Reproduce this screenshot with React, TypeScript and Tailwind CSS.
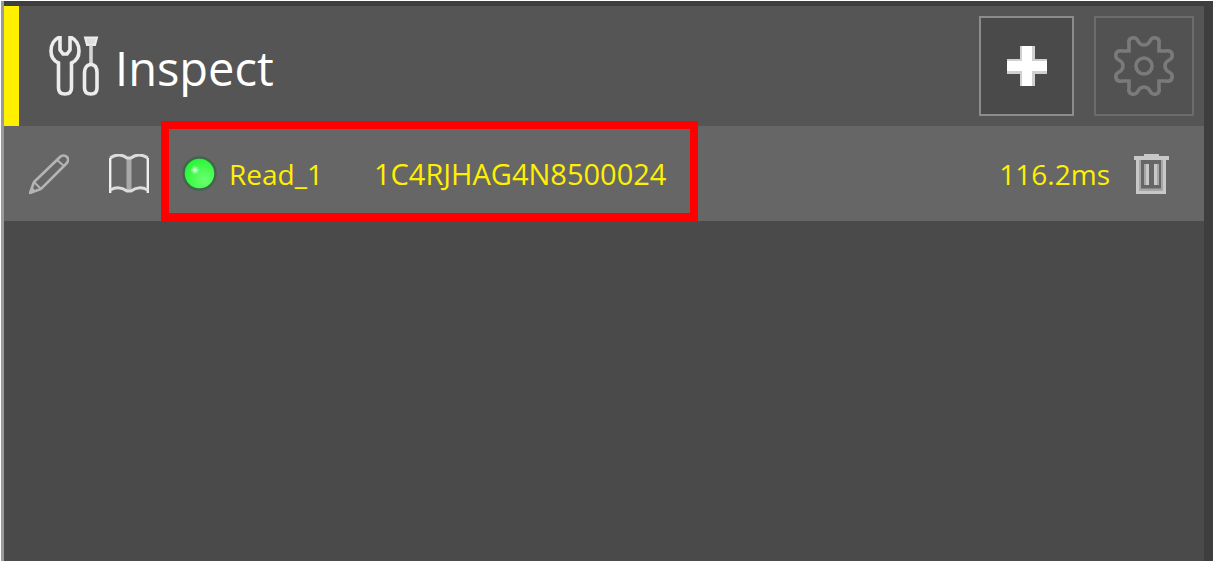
import React from "react";

function ToolsIcon() {
  return (
    <svg className="h-[60px] w-[50px] shrink-0" viewBox="0 0 50 60" fill="none" stroke="#ececec" strokeWidth="3.600" aria-hidden="true">
      <path d="M11 1C5 3 2 9 2 15C2 21 5 25 9.500 27V52C9.500 56 12 58 16 58C20 58 22.500 56 22.500 52V27C27 25 30 21 30 15C30 9 27 3 21 1V14L18 18H14L11 14Z" />
      <path d="M36 1.500H48L46 9H38Z" fill="#ddd" strokeWidth="2" />
      <path d="M42 9V28" stroke="#d4d4d4" />
      <path d="M42 28.500C38 28.500 35.500 32 35.500 37V52C35.500 56 38 58 42 58C46 58 48 56 48 52V37C48 32 46 28.500 42 28.500Z" />
    </svg>
  );
}

function PlusIcon() {
  return (
    <svg className="size-10" viewBox="0 0 40 40" aria-hidden="true">
      <path d="M13 0H28V13H40V28H28V40H13V28H0V13H13Z" fill="#d0d0d0" />
      <path d="M15 0H25V15H40V25H25V40H15V25H0V15H15Z" fill="#fff" />
    </svg>
  );
}

const GEAR_QUARTER =
  "M0-21Q4-21 6-25Q8-29 12-28Q16-27 15-22V-15H22Q27-16 28-12Q29-8 25-6Q21-4 21 0";

function GearIcon() {
  return (
    <svg className="size-[60px]" viewBox="-30 -30 60 60" fill="none" stroke="#7a7a7a" strokeWidth="3.600" aria-hidden="true">
      <path d={GEAR_QUARTER} />
      <path d={GEAR_QUARTER} transform="rotate(90)" />
      <path d={GEAR_QUARTER} transform="rotate(180)" />
      <path d={GEAR_QUARTER} transform="rotate(270)" />
      <circle r="8" />
    </svg>
  );
}

function PencilIcon() {
  return (
    <svg className="size-10" viewBox="0 0 40 40" fill="none" stroke="#b4b4b4" strokeWidth="2.600" aria-hidden="true">
      <path d="M1 39L5 28L31 3C33 1 36 1 38 3C40 5 39 8 37 10L12 35Z" />
      <path d="M5 28L12 35M28 6L35 12" strokeWidth="2" />
      <path d="M1 39L3 33L7 37Z" fill="#b4b4b4" stroke="none" />
    </svg>
  );
}

function BookIcon() {
  return (
    <svg className="size-10" viewBox="0 0 40 40" fill="none" stroke="#eee" strokeWidth="2.400" aria-hidden="true">
      <path d="M20 4V37" stroke="#a8a8a8" strokeWidth="5" />
      <path d="M1.200 39V4M38.800 4V39" />
      <path d="M1.200 4Q10-2 18 4H22Q30-2 38.800 4M1.200 36Q10 31 18 37H22Q30 31 38.800 36" strokeWidth="3" stroke="#dcdcdc" />
    </svg>
  );
}

function TrashIcon() {
  return (
    <svg className="h-10 w-[35px]" viewBox="0 0 35 40" fill="none" stroke="#c8c8c8" aria-hidden="true">
      <path d="M4.500 6V37H29.500V6" strokeWidth="5" stroke="#a6a6a6" />
      <path d="M0 4H35M10 1.500H25" strokeWidth="4" />
      <path d="M3.500 6V38.500H30.500V6" strokeWidth="3" />
      <path d="M12.500 10V31M22.500 10V31" strokeWidth="5" stroke="#a6a6a6" />
      <path d="M13.500 10V31M21.500 10V31" strokeWidth="3" />
    </svg>
  );
}

function StatusLight() {
  return (
    <svg className="size-[35px] shrink-0" viewBox="0 0 35 35" role="img" aria-label="Pass">
      <defs>
        <radialGradient id="light" cx="0.65" cy="0.7" r="0.65">
          <stop offset="0" stopColor="#6cff72" />
          <stop offset="0.55" stopColor="#48fb50" />
          <stop offset="1" stopColor="#2bf53c" />
        </radialGradient>
        <radialGradient id="glint">
          <stop offset="0" stopColor="#fff" />
          <stop offset="1" stopColor="#8cff90" stopOpacity="0" />
        </radialGradient>
      </defs>
      <circle cx="17.500" cy="17.500" r="16" fill="url(#light)" stroke="#41664a" strokeWidth="2.500" />
      <circle cx="13" cy="14" r="5" fill="url(#glint)" />
    </svg>
  );
}

export default function App() {
  return (
    <div className="flex min-h-screen flex-col border-t border-l border-white bg-[#3e3e3e] font-['Open_Sans',sans-serif]">
      <main className="flex grow flex-col border-l-[3px] border-[#9a9c9c] pt-[5px] pr-[9px]">
        <header className="flex h-[120px] items-center border-l-[15px] border-[#fff000] bg-[#555] pr-[10px] pl-[30px]">
          <ToolsIcon />
          <h1 className="ml-4 grow pt-1 text-[47px] leading-[64px] text-white">Inspect</h1>
          <button type="button" aria-label="Add" className="flex h-[100px] w-[95px] shrink-0 items-center justify-center border-2 border-[#8c8c8c] bg-[#4a4a4a]">
            <PlusIcon />
          </button>
          <button type="button" aria-label="Settings" disabled className="ml-5 flex size-[100px] shrink-0 items-center justify-center border-2 border-[#6c6c6c] bg-[#525252]">
            <GearIcon />
          </button>
        </header>
        <section className="flex grow flex-col bg-[#4a4a4a]">
          <div className="flex h-[95px] items-center bg-[#666] pr-[35px] pl-[25px] text-[28px] leading-10 text-[#fff000]">
            <button type="button" aria-label="Edit" className="shrink-0">
              <PencilIcon />
            </button>
            <button type="button" aria-label="Manual" className="ml-10 shrink-0">
              <BookIcon />
            </button>
            <div className="relative ml-3 flex h-full shrink-0 items-center pr-8 pl-[21px]">
              <StatusLight />
              <span className="ml-3 w-[145px]">Read_1</span>
              <span className="text-[29px]">1C4RJHAG4N8500024</span>
              <div className="pointer-events-none absolute inset-x-0 -top-[5px] bottom-0 border-8 border-[#f00]" />
            </div>
            <span className="ml-auto">116.2ms</span>
            <button type="button" aria-label="Delete" className="ml-6 shrink-0">
              <TrashIcon />
            </button>
          </div>
        </section>
      </main>
    </div>
  );
}
